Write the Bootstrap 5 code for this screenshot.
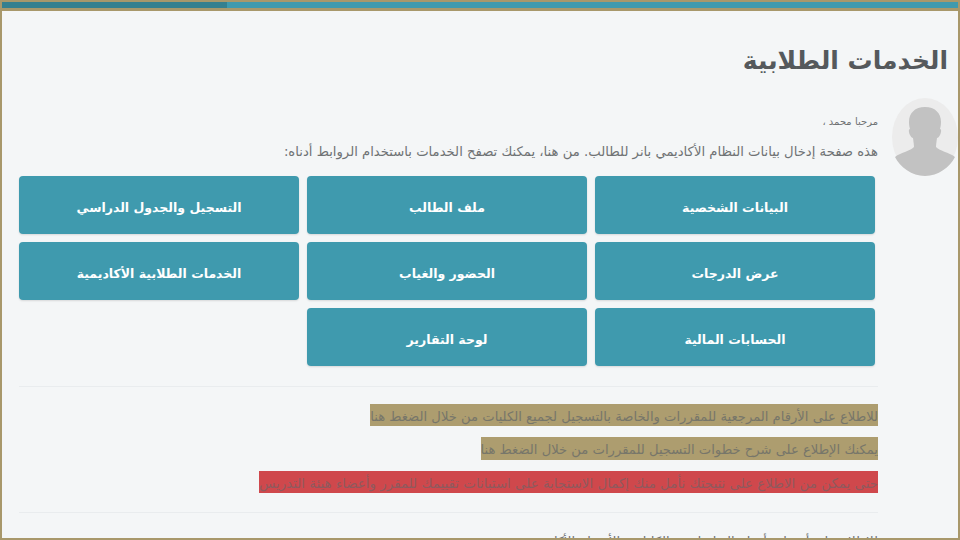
<!DOCTYPE html>
<html lang="ar" dir="rtl">
<head>
  <meta charset="UTF-8" />
  <title>الخدمات الطلابية</title>
  <link href="https://cdn.jsdelivr.net/npm/bootstrap@5.3.0/dist/css/bootstrap.min.css" rel="stylesheet" />
  <style>
    html, body { height: 100%; overflow: hidden; }
    body {
      background: #f4f6f7;
      color: #6f7274;
      font-family: "DejaVu Sans", "Noto Sans", sans-serif;
    }
    .page-frame {
      height: 540px;
      border: 2px solid #a8986b;
      overflow: hidden;
    }
    .top-strip {
      height: 9px;
      background: #3f9aae;
      border-bottom: 3px solid #a8986b;
    }
    .top-strip-done { width: 225px; height: 6px; background: #35808f; margin-right: auto; }
    .page-title {
      margin: 32px 10px 0 0;
      font-size: 25px;
      line-height: 36px;
      font-weight: 700;
      color: #55595c;
    }
    .student-head { margin-top: 19px; padding-left: 17px; }
    .avatar-pic { width: 66px; height: 78px; flex: none; }
    .head-text { margin-right: 14px; }
    .hello-line { font-size: 10px; line-height: 14px; margin: 17px 0 0; }
    .intro-line { font-size: 13.2px; line-height: 20px; margin: 13px 0 0; white-space: nowrap; }
    .service-grid { margin: 0 83px 0 0; width: 856px; display: grid; grid-template-columns: repeat(3, 280px); gap: 8.5px 8px; }
    .service-btn {
      height: 57.5px;
      padding-top: 8px;
      background: #3f9aae;
      border-radius: 4px;
      color: #fff;
      font-weight: 700;
      font-size: 12.5px;
      text-decoration: none;
      box-shadow: 0 1px 2px rgba(0,0,0,.12);
    }
    .soft-rule { margin: 0 80px 0 0; width: 859px; border: 0; border-top: 1px solid #e9ecee; opacity: 1; }
    .rule-one { margin-top: 20px; }
    .rule-two { margin-top: 19px; }
    .notice-list { margin: 17px 80px 0 0; gap: 11px; }
    .notice-bar {
      height: 22.5px;
      padding-top: 2px;
      line-height: 22px;
      font-size: 13.15px;
      color: #77766a;
      text-decoration: none;
      white-space: nowrap;
      overflow: hidden;
      align-self: flex-start;
    }
    .notice-tan { background: #ad9d6f; }
    .notice-red { background: #cf484c; color: #8f5a5e; font-size: 13.4px; }
    .last-line { font-size: 13px; margin: 19px 80px 0 0; line-height: 20px; }
  </style>
</head>
<body>
  <div class="page-frame">
    <div class="top-strip"><div class="top-strip-done"></div></div>
    <h1 class="page-title">الخدمات الطلابية</h1>

    <div class="student-head d-flex">
      <svg class="avatar-pic" viewBox="0 0 66 78" aria-hidden="true">
        <ellipse cx="33" cy="39" rx="33" ry="39" fill="#ececec"/>
        <path fill="#c2c2c2" d="M33 9c-10 0-16 6-16 15 0 3 .5 5 1 7-1.500 0-1.500 3 0 6 1 2 2 3 3 3 .5 4 1 7 1 9-3 4-13 5-19 10 5 10 17 19 30 19s25-9 30-19c-6-5-16-6-19-10 0-2 .5-5 1-9 1 0 2-1 3-3 1.500-3 1.500-6 0-6 .5-2 1-4 1-7 0-9-6-15-16-15z"/>
      </svg>
      <div class="head-text flex-grow-1">
        <p class="hello-line">مرحبا محمد ،</p>
        <p class="intro-line">هذه صفحة إدخال بيانات النظام الأكاديمي بانر للطالب. من هنا، يمكنك تصفح الخدمات باستخدام الروابط أدناه:</p>
      </div>
    </div>

    <div class="service-grid">
      <a href="#" class="service-btn d-flex align-items-center justify-content-center">البيانات الشخصية</a>
      <a href="#" class="service-btn d-flex align-items-center justify-content-center">ملف الطالب</a>
      <a href="#" class="service-btn d-flex align-items-center justify-content-center">التسجيل والجدول الدراسي</a>
      <a href="#" class="service-btn d-flex align-items-center justify-content-center">عرض الدرجات</a>
      <a href="#" class="service-btn d-flex align-items-center justify-content-center">الحضور والغياب</a>
      <a href="#" class="service-btn d-flex align-items-center justify-content-center">الخدمات الطلابية الأكاديمية</a>
      <a href="#" class="service-btn d-flex align-items-center justify-content-center">الحسابات المالية</a>
      <a href="#" class="service-btn d-flex align-items-center justify-content-center">لوحة التقارير</a>
    </div>

    <hr class="soft-rule rule-one" />

    <div class="notice-list d-flex flex-column">
      <a href="#" class="notice-bar notice-tan">للاطلاع على الأرقام المرجعية للمقررات والخاصة بالتسجيل لجميع الكليات من خلال الضغط هنا</a>
      <a href="#" class="notice-bar notice-tan">يمكنك الإطلاع على شرح خطوات التسجيل للمقررات من خلال الضغط هنا</a>
      <a href="#" class="notice-bar notice-red">حتى يمكن من الاطلاع على نتيجتك نأمل منك إكمال الاستجابة على استبانات تقييمك للمقرر وأعضاء هيئة التدريس</a>
    </div>

    <hr class="soft-rule rule-two" />
    <p class="last-line">للاطلاع على أسماء وأرقام التواصل مع الكليات والأقسام الأكاديمية</p>
  </div>
  <script src="https://cdn.jsdelivr.net/npm/bootstrap@5.3.0/dist/js/bootstrap.bundle.min.js"></script>
</body>
</html>
